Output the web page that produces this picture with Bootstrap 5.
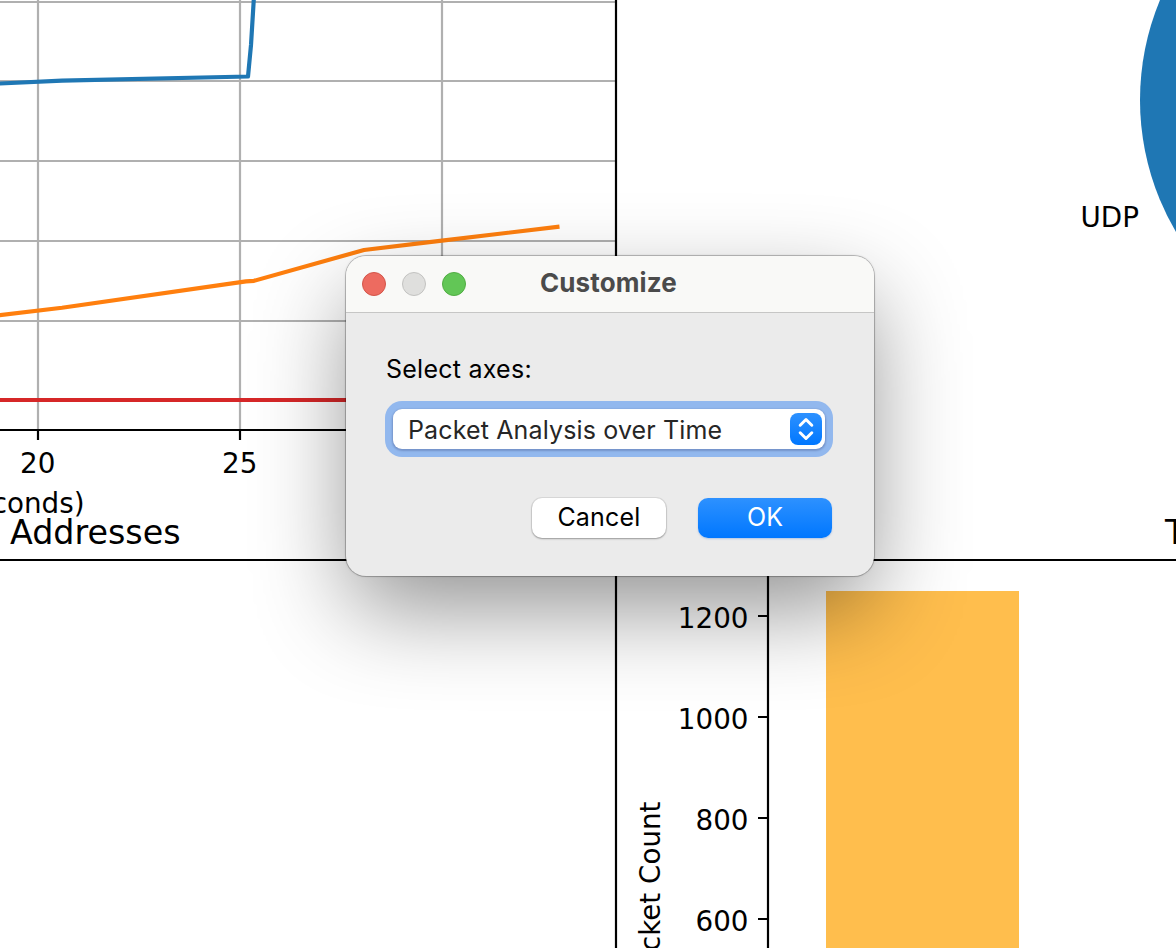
<!DOCTYPE html>
<html lang="en">
<head>
<meta charset="utf-8">
<meta name="viewport" content="width=device-width, initial-scale=1">
<title>Customize</title>
<link href="https://cdn.jsdelivr.net/npm/bootstrap@5.3.0/dist/css/bootstrap.min.css" rel="stylesheet">
<style>
  body { width: 1176px; height: 948px; background: #fff; }
  .plots text { font-family: "DejaVu Sans", sans-serif; font-size: 27.78px; fill: #000; }
  .plots .plot-title { font-size: 33.33px; }
  .dialog-layer { padding-top: 256px; padding-left: 346px; }
  .dialog-box {
    width: 528px; height: 320px; border-radius: 20px; background: #ebebeb;
    font-family: Inter, "Liberation Sans", sans-serif; font-size: 25px; line-height: 30px; color: #000;
    box-shadow: 0 0 0 1px rgba(0,0,0,.2), 0 0 3px rgba(0,0,0,.2), 0 36px 94px -5px rgba(0,0,0,.44);
  }
  .title-strip { height: 57px; background: #f9f9f7; border-bottom: 1px solid #c6c6c5; border-radius: 20px 20px 0 0; padding-left: 16px; gap: 16px; }
  .dot { width: 24px; height: 24px; border-radius: 50%; border: 1px solid; }
  .dot-close { background: #ed6b60; border-color: #d35549; }
  .dot-min { background: #dfdfdd; border-color: #c3c3c1; }
  .dot-zoom { background: #62c656; border-color: #51ad43; }
  .title-label { font-size: 26px; font-weight: 700; color: #4b4b4b; margin-left: 58px; letter-spacing: .1px; margin-top: -2px; }
  .dialog-content { padding: 41px 42px 38px 40px; }
  .axes-label { letter-spacing: .25px; }
  .axes-select {
    height: 40px; margin: 25px 7px 0 7px; border-radius: 9px; background: #fff; color: #262626;
    padding: 0 3px 0 15px; box-shadow: 0 1px 2px 1px rgba(0,0,60,.2), 0 0 0 8px #92b8ee;
  }
  .axes-value { letter-spacing: .14px; padding-top: 2px; }
  .stepper { width: 32px; height: 32px; border-radius: 8px; background: linear-gradient(#2d91ff, #0077ff); }
  .actions { gap: 32px; margin-top: 49px; }
  .action { width: 134px; height: 40px; border: 0; border-radius: 10px; padding: 0 0 2px; font-size: 25px; line-height: 38px; }
  .action-plain, .action-plain:hover { background: #fff; color: #000; letter-spacing: .2px; box-shadow: 0 0 0 1px rgba(0,0,0,.07), 0 1px 2px rgba(0,0,0,.3); }
  .action-main, .action-main:hover { background: linear-gradient(#2d91ff, #0077ff); color: #fff; box-shadow: 0 1px 2px rgba(0,90,220,.25); }
</style>
</head>
<body class="position-relative overflow-hidden m-0">
<svg class="plots d-block position-absolute top-0 start-0" width="1176" height="948" viewBox="0 0 1176 948" aria-hidden="true">
  <!-- line plot -->
  <g stroke="#b0b0b0" stroke-width="2.2">
    <path d="M38 0V430M240 0V430M442 0V430M0 2H616M0 81H616M0 161H616M0 241H616M0 321H616"/>
  </g>
  <g fill="none" stroke-width="4.17" stroke-linejoin="round">
    <path stroke="#1f77b4" d="M-4 83.7L62 80.7L248 76.5L251 45L254 -4"/>
    <path stroke="#ff7f0e" d="M-4 315.6L62 307.8L246 281.4L254 280.8L364 250L442 240.6L559.5 226.6"/>
    <path stroke="#d62728" d="M-4 400H420"/>
  </g>
  <path d="M616 0V948M0 430H616M0 560H1176M768 560V948" stroke="#000" stroke-width="2.2" fill="none"/>
  <path d="M38 430V440M240 430V440M758 616H768M758 717H768M758 818H768M758 919H768" stroke="#000" stroke-width="2.2" fill="none"/>
  <text x="20" y="473">20</text>
  <text x="222" y="473">25</text>
  <text x="84.5" y="513" text-anchor="end">conds)</text>
  <text class="plot-title" x="10" y="544">Addresses</text>
  <!-- pie chart -->
  <circle cx="1400" cy="100" r="260" fill="#1f77b4"/>
  <text x="1080.5" y="227">UDP</text>
  <text class="plot-title" x="1165" y="544">T</text>
  <!-- bar chart -->
  <rect x="826" y="591" width="193" height="357" fill="#ffbe4d"/>
  <text x="748.5" y="628" text-anchor="end">1200</text>
  <text x="748.5" y="729" text-anchor="end">1000</text>
  <text x="748.5" y="830" text-anchor="end">800</text>
  <text x="748.5" y="931" text-anchor="end">600</text>
  <text transform="translate(660 801.5) rotate(-90)" text-anchor="end">cket Count</text>
</svg>

<main class="dialog-layer position-relative">
  <section class="dialog-box" role="dialog" aria-labelledby="dlg-title">
    <header class="title-strip d-flex align-items-center">
      <span class="dot dot-close"></span>
      <span class="dot dot-min"></span>
      <span class="dot dot-zoom"></span>
      <span class="title-label" id="dlg-title">Customize</span>
    </header>
    <div class="dialog-content">
      <div class="axes-label">Select axes:</div>
      <div class="axes-select d-flex align-items-center justify-content-between">
        <span class="axes-value">Packet Analysis over Time</span>
        <span class="stepper d-block">
          <svg class="d-block" width="32" height="32" viewBox="0 0 32 32" fill="none" stroke="#fff" stroke-width="3" stroke-linecap="round" stroke-linejoin="round"><path d="M10.2 12.2L16 6.5L21.8 12.2M10.2 19.8L16 25.5L21.8 19.8"/></svg>
        </span>
      </div>
      <div class="actions d-flex justify-content-end">
        <button type="button" class="btn action action-plain">Cancel</button>
        <button type="button" class="btn action action-main">OK</button>
      </div>
    </div>
  </section>
</main>
<script src="https://cdn.jsdelivr.net/npm/bootstrap@5.3.0/dist/js/bootstrap.bundle.min.js"></script>
</body>
</html>
